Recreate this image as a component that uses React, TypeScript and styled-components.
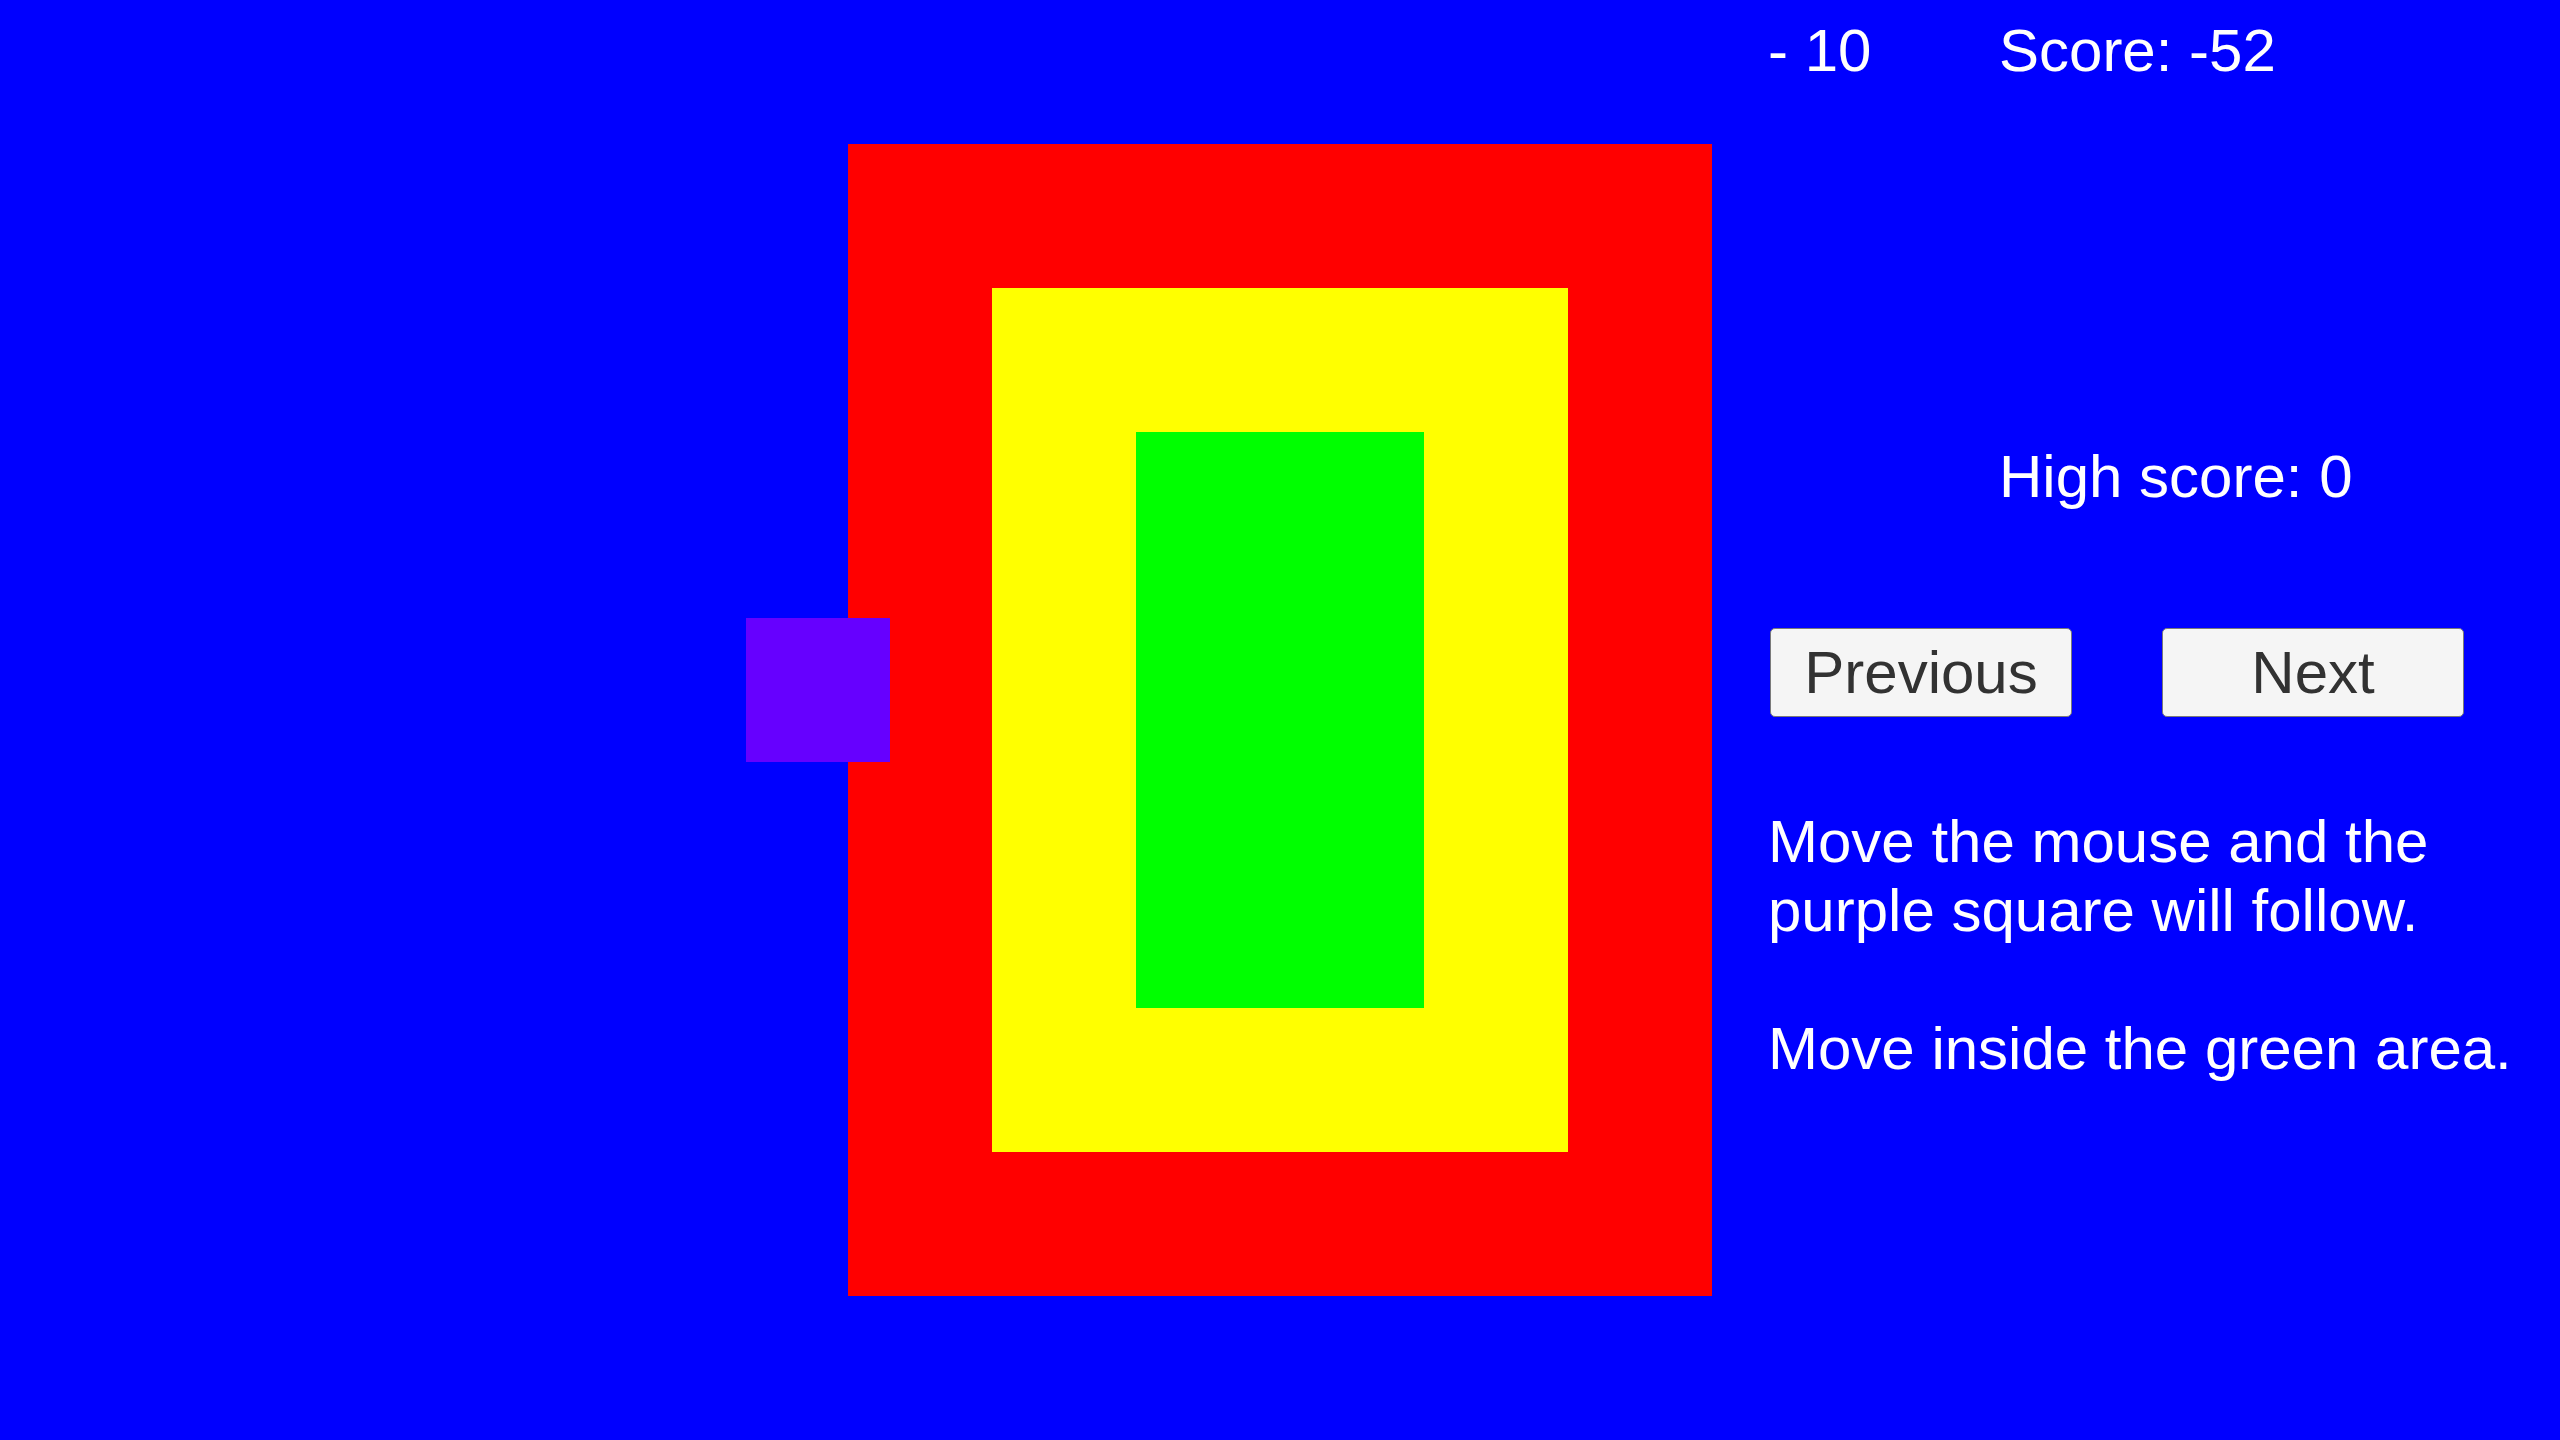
import { FC } from 'react'
import styled, { createGlobalStyle } from 'styled-components'

const GlobalStyle = createGlobalStyle`
  html, body {
    margin: 0;
    padding: 0;
    background: #0000ff;
  }
  body {
    font-family: 'Liberation Sans', Arial, sans-serif;
  }
`

const Page = styled.div`
  position: relative;
  display: flex;
  align-items: flex-start;
  width: 2560px;
  height: 1440px;
  overflow: hidden;
  background: #0000ff;
  color: #fff;
  font-size: 60px;
  line-height: 69px;
`

const Field = styled.div`
  margin: 144px 0 0 848px;
`

const Zone = styled.div<{ $color: string }>`
  display: flex;
  padding: 144px;
  background: ${(p) => p.$color};
`

const Core = styled.div`
  width: 288px;
  height: 576px;
  background: #00ff00;
`

const Follower = styled.div`
  position: absolute;
  left: 746px;
  top: 618px;
  width: 144px;
  height: 144px;
  background: #6600ff;
`

const Panel = styled.div`
  display: flex;
  flex-direction: column;
  margin-left: 56px;
  width: 780px;
`

const TopRow = styled.div`
  display: flex;
  padding-top: 16px;
`

const Delta = styled.div`
  width: 231px;
`

const HighScore = styled.div`
  margin: 357px 0 0 231px;
`

const ButtonRow = styled.div`
  display: flex;
  gap: 90px;
  margin: 117px 0 0 2px;
`

const Button = styled.button`
  width: 302px;
  height: 89px;
  padding: 0;
  border: 1px solid #7a7a7a;
  border-radius: 5px;
  background: #f5f5f5;
  color: #323232;
  font-family: inherit;
  font-size: 60px;
  line-height: 87px;
  cursor: pointer;
`

const Help = styled.div`
  margin-top: 90px;
  display: flex;
  flex-direction: column;
  gap: 69px;
`

const HelpLine = styled.p`
  margin: 0;
`

const App: FC = () => {
  return (
    <>
      <GlobalStyle />
      <Page>
        <Field>
          <Zone $color="#ff0000">
            <Zone $color="#ffff00">
              <Core />
            </Zone>
          </Zone>
        </Field>
        <Panel>
          <TopRow>
            <Delta>- 10</Delta>
            <div>Score: -52</div>
          </TopRow>
          <HighScore>High score: 0</HighScore>
          <ButtonRow>
            <Button>Previous</Button>
            <Button>Next</Button>
          </ButtonRow>
          <Help>
            <HelpLine>
              Move the mouse and the
              <br />
              purple square will follow.
            </HelpLine>
            <HelpLine>Move inside the green area.</HelpLine>
          </Help>
        </Panel>
        <Follower />
      </Page>
    </>
  )
}

export default App
